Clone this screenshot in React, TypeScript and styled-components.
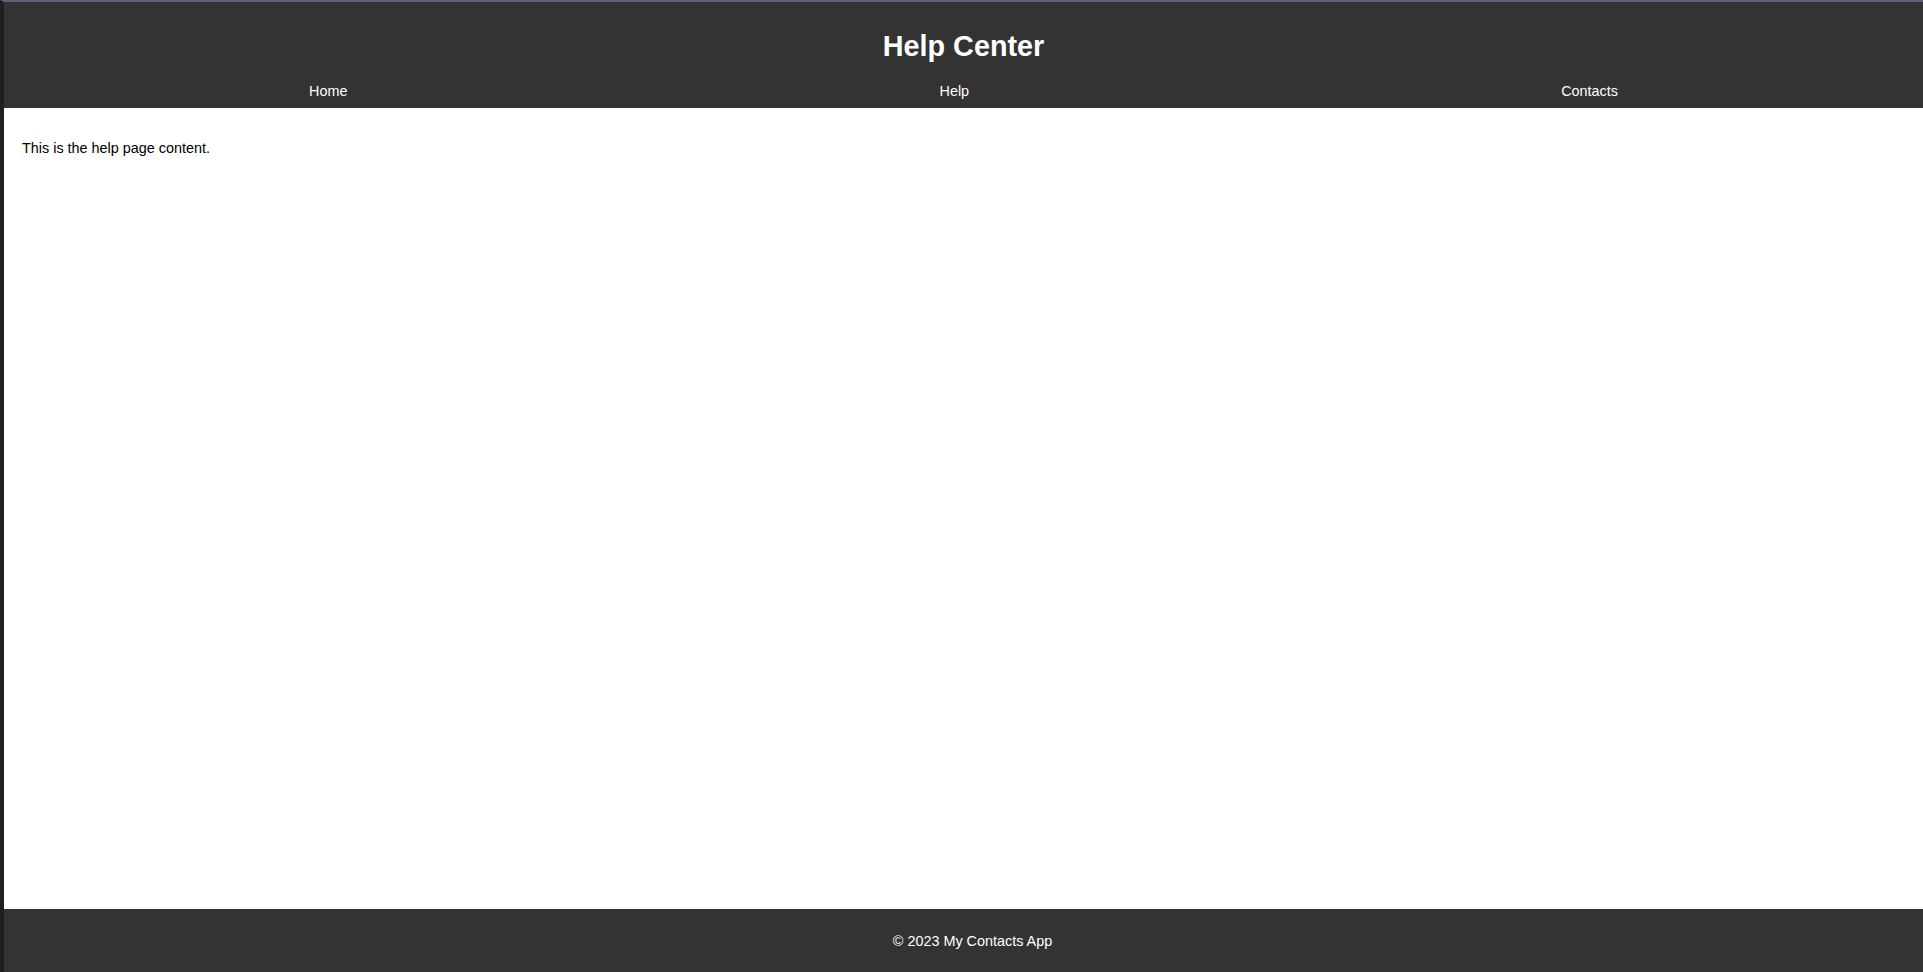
import React from 'react'
import styled, { createGlobalStyle } from 'styled-components'

const GlobalStyle = createGlobalStyle`
  html,
  body {
    margin: 0;
    padding: 0;
    background: #ffffff;
    font-family: 'Liberation Sans', Arial, sans-serif;
    font-size: 14.4px;
    color: #000000;
  }
`

const Page = styled.div`
  display: flex;
  flex-direction: column;
  min-height: 100vh;
  box-sizing: border-box;
  border-top: 2px solid #625e74;
  border-left: 4px solid #1f1f1f;
  overflow-x: hidden;
`

const Header = styled.header`
  background-color: #333333;
  color: #ffffff;
  padding: 9px;
  text-align: center;
`

const Title = styled.h1`
  margin: 19.3px 0;
  font-size: 28.8px;
  font-weight: bold;
`

const NavList = styled.ul`
  display: flex;
  justify-content: space-around;
  list-style: none;
  margin: 0;
  padding: 0;
  line-height: 16px;
`

const NavLink = styled.a`
  color: #ffffff;
  text-decoration: none;
`

const Main = styled.main`
  flex: 1;
  padding: 18px;
`

const Text = styled.p`
  margin: 14.4px 0;
`

// the footer is 100% wide plus its padding, so its text sits a little right of centre
const Footer = styled.footer`
  width: 100%;
  flex-shrink: 0;
  box-sizing: content-box;
  background-color: #333333;
  color: #ffffff;
  padding: 9px;
  text-align: center;
`

const links = ['Home', 'Help', 'Contacts']

const App = () => {
  return (
    <>
      <GlobalStyle />
      <Page>
        <Header>
          <Title>Help Center</Title>
          <nav>
            <NavList>
              {links.map((link) => (
                <li key={link}>
                  <NavLink href="#">{link}</NavLink>
                </li>
              ))}
            </NavList>
          </nav>
        </Header>
        <Main>
          <Text>This is the help page content.</Text>
        </Main>
        <Footer>
          <Text>&copy; 2023 My Contacts App</Text>
        </Footer>
      </Page>
    </>
  )
}

export default App
